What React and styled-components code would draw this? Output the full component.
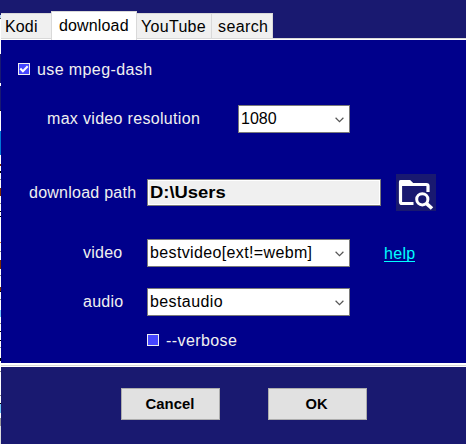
import React from 'react';
import styled, { createGlobalStyle } from 'styled-components';

const GlobalStyle = createGlobalStyle`
  * { box-sizing: border-box; }
  body { margin: 0; overflow: hidden; }
`;

const Window = styled.div`
  width: 466px;
  height: 444px;
  display: flex;
  background: #191970;
  font: 16px/18px "Liberation Sans", Arial, sans-serif;
`;

/* One-pixel sliver of the desktop that shows beside the window. */
const DesktopEdge = styled.div`
  width: 1px;
  flex: none;
  background: linear-gradient(
    #191970 0 15px, #b4d4f0 15px 18px, #555 18px 19px, #fff 19px 54px,
    #191970 54px 83px, #fff 83px 86px, #191970 86px 110px, #111 110px 111px,
    #fff 111px 131px, #0078d7 131px 155px, #fff 155px 164px, #7b2c00 164px 166px,
    #fff 166px 171px, #000 171px 173px, #fff 173px 179px, #888 179px 180px,
    #fff 180px 188px, #7b2c00 188px 196px, #fff 196px 203px, #888 203px 204px,
    #fff 204px 211px, #000 211px 212px, #fff 212px 216px, #000 216px 217px,
    #fff 217px 242px, #d87a2a 242px 243px, #fff 243px 251px, #888 251px 252px,
    #fff 252px 260px, #7b2c00 260px 269px, #fff 269px 275px, #888 275px 276px,
    #fff 276px 287px, #7b2c00 287px 291px, #000 291px 292px, #fff 292px 299px,
    #888 299px 300px, #fff 300px 310px, #72c9fa 310px 317px, #fff 317px 323px,
    #888 323px 324px, #fff 324px 331px, #000 331px 332px, #fff 332px 340px,
    #000 340px 341px, #fff 341px 347px, #888 347px 348px, #fff 348px 358px,
    #000 358px 361px, #fff 361px 371px, #888 371px 372px, #fff 372px 395px,
    #888 395px 396px, #fff 396px 403px, #000 403px 404px, #72c9fa 404px 413px,
    #fff 413px 418px, #999 418px 426px, #ddd 426px 444px
  );
`;

const Content = styled.div`
  flex: 1;
  display: flex;
  flex-direction: column;
`;

const TabBar = styled.div`
  height: 40px;
  flex: none;
  display: flex;
  align-items: flex-end;
  background: linear-gradient(#191970 0 38px, #d9d9d9 38px 39px, #fff 39px 40px);
`;

const Tab = styled.div`
  width: ${(p) => p.$width}px;
  height: ${(p) => (p.$active ? 29 : 25)}px;
  margin-bottom: ${(p) => (p.$active ? 0 : 2)}px;
  padding: ${(p) => (p.$active ? 5 : 4)}px 0 0 ${(p) => p.$pad}px;
  border: solid #d9d9d9;
  border-width: 1px ${(p) => (p.$divider ? 1 : 0)}px 0 ${(p) => (p.$active ? 1 : 0)}px;
  background: ${(p) => (p.$active ? '#fff' : '#f0f0f0')};
  color: #000;
  white-space: nowrap;
`;

const Text = styled.span`
  display: block;
  white-space: nowrap;
  letter-spacing: ${(p) => p.$track || 0}px;
`;

const Panel = styled.div`
  height: 323px;
  flex: none;
  padding-top: 20px;
  background: #00008b;
  color: #f0f0f0;
`;

const Row = styled.div`
  height: ${(p) => p.$height}px;
  margin-top: ${(p) => p.$gap || 0}px;
  padding-left: ${(p) => p.$left || 0}px;
  display: flex;
  align-items: center;
`;

const Label = styled.label`
  width: ${(p) => p.$width}px;
  padding-left: ${(p) => p.$left}px;
  flex: none;
  white-space: nowrap;
  letter-spacing: ${(p) => p.$track || 0}px;
`;

const CheckCaption = styled(Text)`
  padding-top: 2px;
`;

const WideText = styled(Text)`
  transform: scaleX(${(p) => p.$stretch});
  transform-origin: ${(p) => p.$origin || 'left'};
`;

const CheckBox = styled.span`
  width: 12px;
  height: 12px;
  margin-right: 7px;
  border: 1px solid #f0f0f0;
  background: #4646ff;
  display: flex;
`;

const Select = styled.div`
  width: ${(p) => p.$width}px;
  height: 28px;
  padding: 0 5px 1px 2px;
  display: flex;
  align-items: center;
  justify-content: space-between;
  border: 1px solid #7a7a7a;
  background: #fff;
  color: #000;
`;

const Chevron = styled.svg`
  width: 9px;
  height: 6px;
  margin-top: 3px;
`;

const PathField = styled.div`
  width: 234px;
  height: 27px;
  padding: 4px 0 0 2px;
  border: 1px solid #7a7a7a;
  box-shadow: inset 0 0 0 1px #fff;
  background: #f0f0f0;
  color: #000;
  font-weight: bold;
`;

const BrowseButton = styled.div`
  width: 40px;
  height: 37px;
  margin-left: 15px;
  background: #191970;
`;

const HelpLink = styled.a`
  margin-left: 34px;
  height: 18px;
  line-height: 20px;
  color: #00ffff;
  border-bottom: 1px solid #00ffff;
  letter-spacing: ${(p) => p.$track || 0}px;
`;

const Divider = styled.div`
  height: 4px;
  flex: none;
  background: linear-gradient(#fff 0 2px, #d9d9d9 2px 3px, #fff 3px 4px);
`;

const Footer = styled.div`
  flex: 1;
  padding: 21px 0 0 120px;
  display: flex;
  gap: 48px;
`;

const Button = styled.div`
  width: 99px;
  height: 32px;
  padding-right: 2px;
  display: flex;
  align-items: center;
  justify-content: center;
  border: 1px solid #adadad;
  background: #e1e1e1;
  color: #000;
  font-size: 14px;
  font-weight: bold;
`;

function ComboBox({ width, track, children }) {
  return (
    <Select $width={width}>
      <Text $track={track}>{children}</Text>
      <Chevron viewBox="0 0 9 6">
        <path d="M.6 .8 4.5 4.6 8.4 .8" fill="none" stroke="#555" strokeWidth="1.2" />
      </Chevron>
    </Select>
  );
}

export default function App() {
  return (
    <>
      <GlobalStyle />
      <Window>
        <DesktopEdge />
        <Content>
          <TabBar>
            <Tab $width={50} $pad={4}><Text $track={0.15}>Kodi</Text></Tab>
            <Tab $width={86} $pad={7} $active $divider><Text $track={0.15}>download</Text></Tab>
            <Tab $width={75} $pad={4} $divider><Text $track={0.3}>YouTube</Text></Tab>
            <Tab $width={61} $pad={6} $divider><Text $track={0.4}>search</Text></Tab>
          </TabBar>
          <Panel>
            <Row $height={18} $left={17}>
              <CheckBox>
                <svg width="10" height="10" viewBox="0 0 10 10">
                  <path d="M1.3 4.500 3.900 7.200 8.700 2.200" fill="none" stroke="#fff" strokeWidth="2" />
                </svg>
              </CheckBox>
              <CheckCaption $track={0.4}>use mpeg-dash</CheckCaption>
            </Row>
            <Row $height={28} $gap={27}>
              <Label $width={237} $left={46} $track={0.32}>max video resolution</Label>
              <ComboBox width={112}>1080</ComboBox>
            </Row>
            <Row $height={37} $gap={41}>
              <Label $width={146} $left={28} $track={0.25}>download path</Label>
              <PathField><WideText $stretch={1.15}>D:\Users</WideText></PathField>
              <BrowseButton>
                <svg width="40" height="37" viewBox="0 0 40 37">
                  <path d="M4.500 12V8Q4.500 7.500 5.500 7.500H13L16 10.500H30.500Q32 10.500 32 12V18M4.500 11V28Q4.500 29.500 6 29.500H17.500" fill="none" stroke="#fff" strokeWidth="3.200" />
                  <path d="M3 8Q3 6 5 6H14L17.500 9.500V12H3Z" fill="#fff" />
                  <circle cx="26.300" cy="25.300" r="5.600" fill="none" stroke="#fff" strokeWidth="3" />
                  <path d="M30.300 29.300 36 34.500" stroke="#fff" strokeWidth="3.600" />
                </svg>
              </BrowseButton>
            </Row>
            <Row $height={28} $gap={28}>
              <Label $width={146} $left={82} $track={0.25}>video</Label>
              <ComboBox width={203} track={0.36}>bestvideo[ext!=webm]</ComboBox>
              <HelpLink $track={0.3}>help</HelpLink>
            </Row>
            <Row $height={28} $gap={21}>
              <Label $width={146} $left={82} $track={0.25}>audio</Label>
              <ComboBox width={203} track={0.4}>bestaudio</ComboBox>
            </Row>
            <Row $height={18} $gap={15} $left={146}>
              <CheckBox />
              <CheckCaption $track={0.42}>--verbose</CheckCaption>
            </Row>
          </Panel>
          <Divider />
          <Footer>
            <Button><WideText $stretch={1.06} $origin="center">Cancel</WideText></Button>
            <Button><WideText $stretch={1.05} $origin="center">OK</WideText></Button>
          </Footer>
        </Content>
      </Window>
    </>
  );
}
